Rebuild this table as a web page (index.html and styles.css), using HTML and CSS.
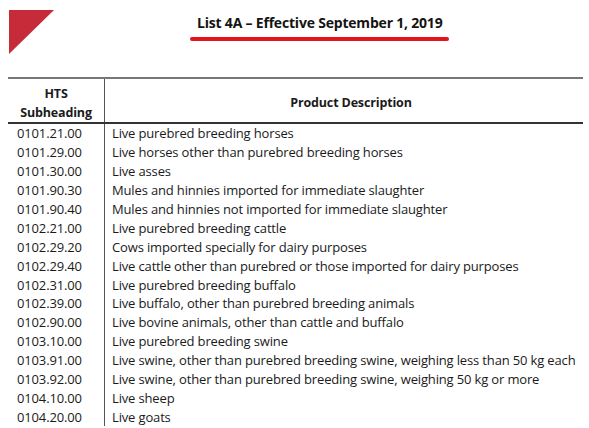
FILE: index.html
```html
<!DOCTYPE html>
<html>
<head>
<meta charset="utf-8">
<link rel="stylesheet" href="styles.css">
</head>
<body>
<div class="top">
  <div class="triangle"></div>
  <div class="title">
    <div class="title-text">List 4A – Effective September 1, 2019</div>
    <div class="title-bar"></div>
  </div>
</div>
<table class="list">
  <thead>
    <tr>
      <th class="code-h">HTS<br>Subheading</th>
      <th class="desc-h">Product Description</th>
    </tr>
  </thead>
  <tbody>
    <tr><td class="code">0101.21.00</td><td class="desc">Live purebred breeding horses</td></tr>
    <tr><td class="code">0101.29.00</td><td class="desc">Live horses other than purebred breeding horses</td></tr>
    <tr><td class="code">0101.30.00</td><td class="desc">Live asses</td></tr>
    <tr><td class="code">0101.90.30</td><td class="desc">Mules and hinnies imported for immediate slaughter</td></tr>
    <tr><td class="code">0101.90.40</td><td class="desc">Mules and hinnies not imported for immediate slaughter</td></tr>
    <tr><td class="code">0102.21.00</td><td class="desc">Live purebred breeding cattle</td></tr>
    <tr><td class="code">0102.29.20</td><td class="desc">Cows imported specially for dairy purposes</td></tr>
    <tr><td class="code">0102.29.40</td><td class="desc">Live cattle other than purebred or those imported for dairy purposes</td></tr>
    <tr><td class="code">0102.31.00</td><td class="desc">Live purebred breeding buffalo</td></tr>
    <tr><td class="code">0102.39.00</td><td class="desc">Live buffalo, other than purebred breeding animals</td></tr>
    <tr><td class="code">0102.90.00</td><td class="desc">Live bovine animals, other than cattle and buffalo</td></tr>
    <tr><td class="code">0103.10.00</td><td class="desc">Live purebred breeding swine</td></tr>
    <tr><td class="code">0103.91.00</td><td class="desc">Live swine, other than purebred breeding swine, weighing less than 50 kg each</td></tr>
    <tr><td class="code">0103.92.00</td><td class="desc">Live swine, other than purebred breeding swine, weighing 50 kg or more</td></tr>
    <tr><td class="code">0104.10.00</td><td class="desc">Live sheep</td></tr>
    <tr><td class="code">0104.20.00</td><td class="desc">Live goats</td></tr>
  </tbody>
</table>
</body>
</html>
```
FILE: styles.css
```css
html, body {
  margin: 0;
  padding: 0;
  background: #ffffff;
}
body {
  font-family: "Open Sans", "Liberation Sans", sans-serif;
  color: #1a1a1a;
  overflow: hidden;
}
.top {
  display: flex;
  align-items: flex-start;
  padding: 10px 0 0 9px;
  height: 77px;
  box-sizing: border-box;
}
.triangle {
  width: 0;
  height: 0;
  border-top: 44px solid #c72a39;
  border-right: 45px solid transparent;
}
.title {
  display: flex;
  flex-direction: column;
  align-items: stretch;
  margin-left: 136px;
  margin-top: 4px;
}
.title-text {
  font-weight: 700;
  font-size: 14px;
  line-height: 18px;
  padding: 0 7px;
  color: #141414;
  letter-spacing: -0.2px;
}
.title-bar {
  height: 4px;
  margin-top: 5px;
  border-radius: 3px;
  background: #e2141c;
}
.list {
  margin-left: 8px;
  width: 575px;
  border-collapse: collapse;
  font-size: 13px;
  letter-spacing: -0.15px;
}
.list thead tr {
  height: 45px;
  border-top: 2px solid #777777;
  border-bottom: 2px solid #333333;
}
.list th {
  font-weight: 700;
  font-size: 12.5px;
  line-height: 19px;
  color: #1a1a1a;
  padding: 4px 0 0 0;
}
.code-h {
  width: 96px;
  text-align: center;
  border-right: 1px solid #555555;
}
.desc-h {
  text-align: center;
  padding-left: 14px !important;
}
.list td {
  height: 18.9px;
  padding: 0;
  line-height: 18px;
  white-space: nowrap;
}
.code {
  padding-left: 9px !important;
  border-right: 1px solid #555555;
}
.desc {
  padding-left: 7px !important;
}
```
